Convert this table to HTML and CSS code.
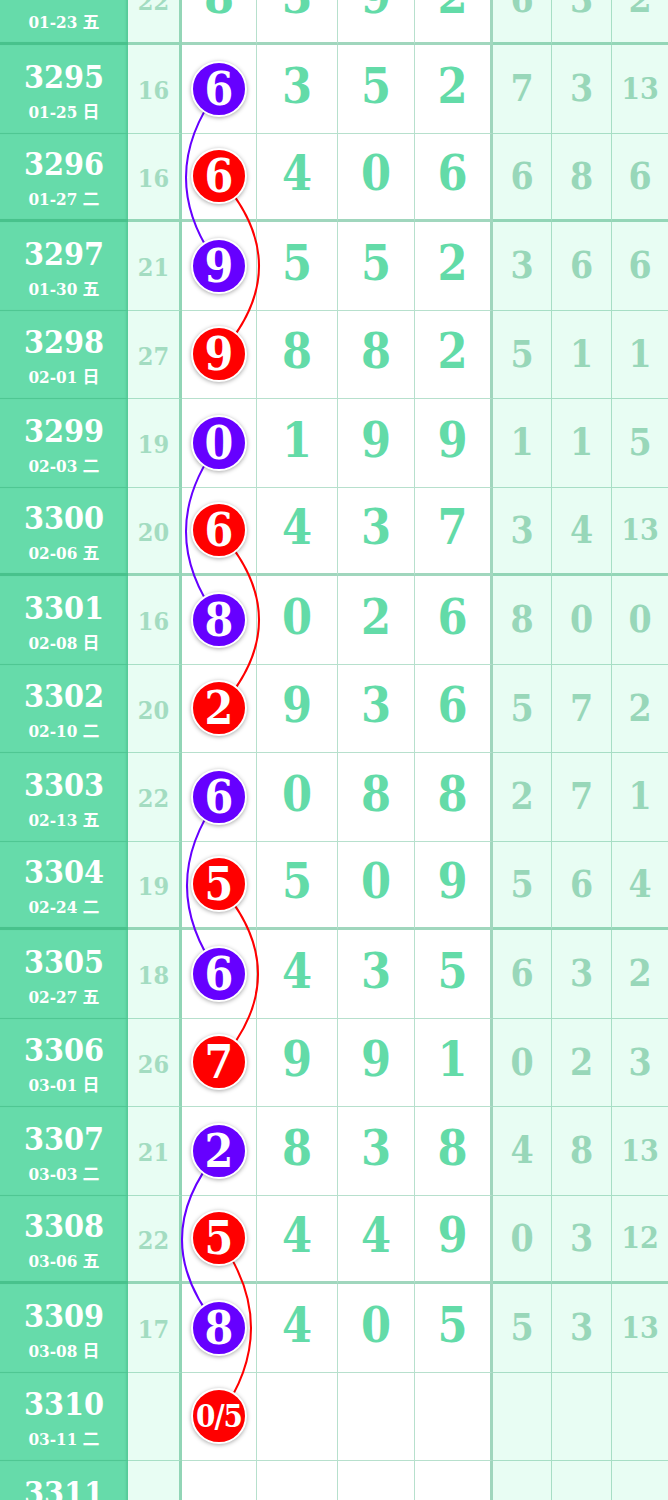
FILE: index.html
```html
<!DOCTYPE html>
<html lang="zh">
<head>
  <meta charset="UTF-8">
  <meta name="viewport" content="width=device-width, initial-scale=1.0">
  <title>走势图</title>
  <link rel="stylesheet" href="styles.css">
</head>
<body>
  <div class="chart">
    <!-- 连线 -->
    <svg class="lines" width="668" height="1593" viewBox="0 0 668 1593">
      <path d="M219 132 Q153 220.5 219 309" stroke="#6600ff"/>
      <path d="M219 220 Q299 309 219 398" stroke="#ff0000"/>
      <path d="M219 486 Q153 574.5 219 663" stroke="#6600ff"/>
      <path d="M219 574 Q299 663 219 752" stroke="#ff0000"/>
      <path d="M219 840 Q155 928.5 219 1017" stroke="#6600ff"/>
      <path d="M219 928 Q297 1017 219 1106" stroke="#ff0000"/>
      <path d="M219 1194 Q145 1282.5 219 1371" stroke="#6600ff"/>
      <path d="M219 1282 Q283 1371 219 1460" stroke="#ff0000"/>
    </svg>

    <div class="row end">
      <div class="no"><span class="num">3294</span><span class="date">01-23 五</span></div>
      <div class="sum">22</div>
      <div class="pick d">8</div>
      <div class="d">3</div><div class="d">9</div><div class="d last">2</div>
      <div class="r">6</div><div class="r">3</div><div class="r">2</div>
    </div>
    <div class="row">
      <div class="no"><span class="num">3295</span><span class="date">01-25 日</span></div>
      <div class="sum">16</div>
      <div class="pick"><span class="ball purple">6</span></div>
      <div class="d">3</div><div class="d">5</div><div class="d last">2</div>
      <div class="r">7</div><div class="r">3</div><div class="r two">13</div>
    </div>
    <div class="row end">
      <div class="no"><span class="num">3296</span><span class="date">01-27 二</span></div>
      <div class="sum">16</div>
      <div class="pick"><span class="ball red">6</span></div>
      <div class="d">4</div><div class="d">0</div><div class="d last">6</div>
      <div class="r">6</div><div class="r">8</div><div class="r">6</div>
    </div>
    <div class="row">
      <div class="no"><span class="num">3297</span><span class="date">01-30 五</span></div>
      <div class="sum">21</div>
      <div class="pick"><span class="ball purple">9</span></div>
      <div class="d">5</div><div class="d">5</div><div class="d last">2</div>
      <div class="r">3</div><div class="r">6</div><div class="r">6</div>
    </div>
    <div class="row">
      <div class="no"><span class="num">3298</span><span class="date">02-01 日</span></div>
      <div class="sum">27</div>
      <div class="pick"><span class="ball red">9</span></div>
      <div class="d">8</div><div class="d">8</div><div class="d last">2</div>
      <div class="r">5</div><div class="r">1</div><div class="r">1</div>
    </div>
    <div class="row">
      <div class="no"><span class="num">3299</span><span class="date">02-03 二</span></div>
      <div class="sum">19</div>
      <div class="pick"><span class="ball purple">0</span></div>
      <div class="d">1</div><div class="d">9</div><div class="d last">9</div>
      <div class="r">1</div><div class="r">1</div><div class="r">5</div>
    </div>
    <div class="row end">
      <div class="no"><span class="num">3300</span><span class="date">02-06 五</span></div>
      <div class="sum">20</div>
      <div class="pick"><span class="ball red">6</span></div>
      <div class="d">4</div><div class="d">3</div><div class="d last">7</div>
      <div class="r">3</div><div class="r">4</div><div class="r two">13</div>
    </div>
    <div class="row">
      <div class="no"><span class="num">3301</span><span class="date">02-08 日</span></div>
      <div class="sum">16</div>
      <div class="pick"><span class="ball purple">8</span></div>
      <div class="d">0</div><div class="d">2</div><div class="d last">6</div>
      <div class="r">8</div><div class="r">0</div><div class="r">0</div>
    </div>
    <div class="row">
      <div class="no"><span class="num">3302</span><span class="date">02-10 二</span></div>
      <div class="sum">20</div>
      <div class="pick"><span class="ball red">2</span></div>
      <div class="d">9</div><div class="d">3</div><div class="d last">6</div>
      <div class="r">5</div><div class="r">7</div><div class="r">2</div>
    </div>
    <div class="row">
      <div class="no"><span class="num">3303</span><span class="date">02-13 五</span></div>
      <div class="sum">22</div>
      <div class="pick"><span class="ball purple">6</span></div>
      <div class="d">0</div><div class="d">8</div><div class="d last">8</div>
      <div class="r">2</div><div class="r">7</div><div class="r">1</div>
    </div>
    <div class="row end">
      <div class="no"><span class="num">3304</span><span class="date">02-24 二</span></div>
      <div class="sum">19</div>
      <div class="pick"><span class="ball red">5</span></div>
      <div class="d">5</div><div class="d">0</div><div class="d last">9</div>
      <div class="r">5</div><div class="r">6</div><div class="r">4</div>
    </div>
    <div class="row">
      <div class="no"><span class="num">3305</span><span class="date">02-27 五</span></div>
      <div class="sum">18</div>
      <div class="pick"><span class="ball purple">6</span></div>
      <div class="d">4</div><div class="d">3</div><div class="d last">5</div>
      <div class="r">6</div><div class="r">3</div><div class="r">2</div>
    </div>
    <div class="row">
      <div class="no"><span class="num">3306</span><span class="date">03-01 日</span></div>
      <div class="sum">26</div>
      <div class="pick"><span class="ball red">7</span></div>
      <div class="d">9</div><div class="d">9</div><div class="d last">1</div>
      <div class="r">0</div><div class="r">2</div><div class="r">3</div>
    </div>
    <div class="row">
      <div class="no"><span class="num">3307</span><span class="date">03-03 二</span></div>
      <div class="sum">21</div>
      <div class="pick"><span class="ball purple">2</span></div>
      <div class="d">8</div><div class="d">3</div><div class="d last">8</div>
      <div class="r">4</div><div class="r">8</div><div class="r two">13</div>
    </div>
    <div class="row end">
      <div class="no"><span class="num">3308</span><span class="date">03-06 五</span></div>
      <div class="sum">22</div>
      <div class="pick"><span class="ball red">5</span></div>
      <div class="d">4</div><div class="d">4</div><div class="d last">9</div>
      <div class="r">0</div><div class="r">3</div><div class="r two">12</div>
    </div>
    <div class="row">
      <div class="no"><span class="num">3309</span><span class="date">03-08 日</span></div>
      <div class="sum">17</div>
      <div class="pick"><span class="ball purple">8</span></div>
      <div class="d">4</div><div class="d">0</div><div class="d last">5</div>
      <div class="r">5</div><div class="r">3</div><div class="r two">13</div>
    </div>
    <div class="row">
      <div class="no"><span class="num">3310</span><span class="date">03-11 二</span></div>
      <div class="sum"></div>
      <div class="pick"><span class="ball red small">0/5</span></div>
      <div class="d"></div><div class="d"></div><div class="d last"></div>
      <div class="r"></div><div class="r"></div><div class="r"></div>
    </div>
    <div class="row">
      <div class="no"><span class="num">3311</span><span class="date">03-13 四</span></div>
      <div class="sum"></div>
      <div class="pick"></div>
      <div class="d"></div><div class="d"></div><div class="d last"></div>
      <div class="r"></div><div class="r"></div><div class="r"></div>
    </div>
  </div>
</body>
</html>
```

FILE: styles.css
```css
body {
  margin: 0;
  padding: 0;
  background: #fff;
  overflow: hidden;
  font-family: "DejaVu Serif Condensed", "DejaVu Serif", "Noto Sans CJK SC", serif;
  font-weight: bold;
}
.chart {
  position: relative;
  width: 668px;
  margin-top: -43.5px;
}
.lines {
  position: absolute;
  top: 0;
  left: 0;
  z-index: 1;
  pointer-events: none;
}
.lines path {
  fill: none;
  stroke-width: 2;
}
.row {
  display: grid;
  grid-template-columns: 128px 54px 75px 81px 77px 78px 59px 60px 56px;
  height: 88.5px;
}
.row > div {
  box-sizing: border-box;
  display: flex;
  align-items: center;
  justify-content: center;
  border-bottom: 1px solid rgba(30, 160, 100, 0.32);
  border-right: 1px solid rgba(30, 160, 100, 0.32);
  line-height: 1;
}
.row.end > div {
  border-bottom: 3px solid rgba(30, 160, 100, 0.42);
}
.row > div:last-child {
  border-right: none;
}
.no {
  flex-direction: column;
  background: #66dbaa;
  color: #fff;
  padding-top: 5px;
  box-shadow: inset -3px 0 2px -1px rgba(0, 110, 60, 0.15);
}
.row > .no {
  border-right: none;
}
.no .num {
  font-size: 32px;
  line-height: 32px;
}
.no .date {
  font-size: 17px;
  line-height: 20px;
  margin-top: 9px;
}
.sum {
  background: #e8fdf3;
  color: #a3dcc1;
  font-size: 25px;
  padding-top: 4px;
}
.row > .sum,
.row > .last {
  border-right: 3px solid rgba(30, 160, 100, 0.42);
}
.d {
  color: #63dba8;
  font-size: 48px;
  padding-bottom: 6px;
}
.r {
  background: #e8fdf3;
  color: #98d7b9;
  font-size: 37px;
}
.r.two {
  font-size: 30px;
}
.pick {
  background: #fff;
}
.ball {
  position: relative;
  z-index: 2;
  width: 52px;
  height: 52px;
  border: 2px solid #fff;
  border-radius: 50%;
  display: flex;
  align-items: center;
  justify-content: center;
  color: #fff;
  font-size: 46px;
  box-shadow: 0 1px 4px rgba(0, 0, 0, 0.35);
}
.ball.purple {
  background: #6600ff;
}
.ball.red {
  background: #ff0000;
}
.ball.small {
  font-size: 31px;
  letter-spacing: -1px;
}
```
